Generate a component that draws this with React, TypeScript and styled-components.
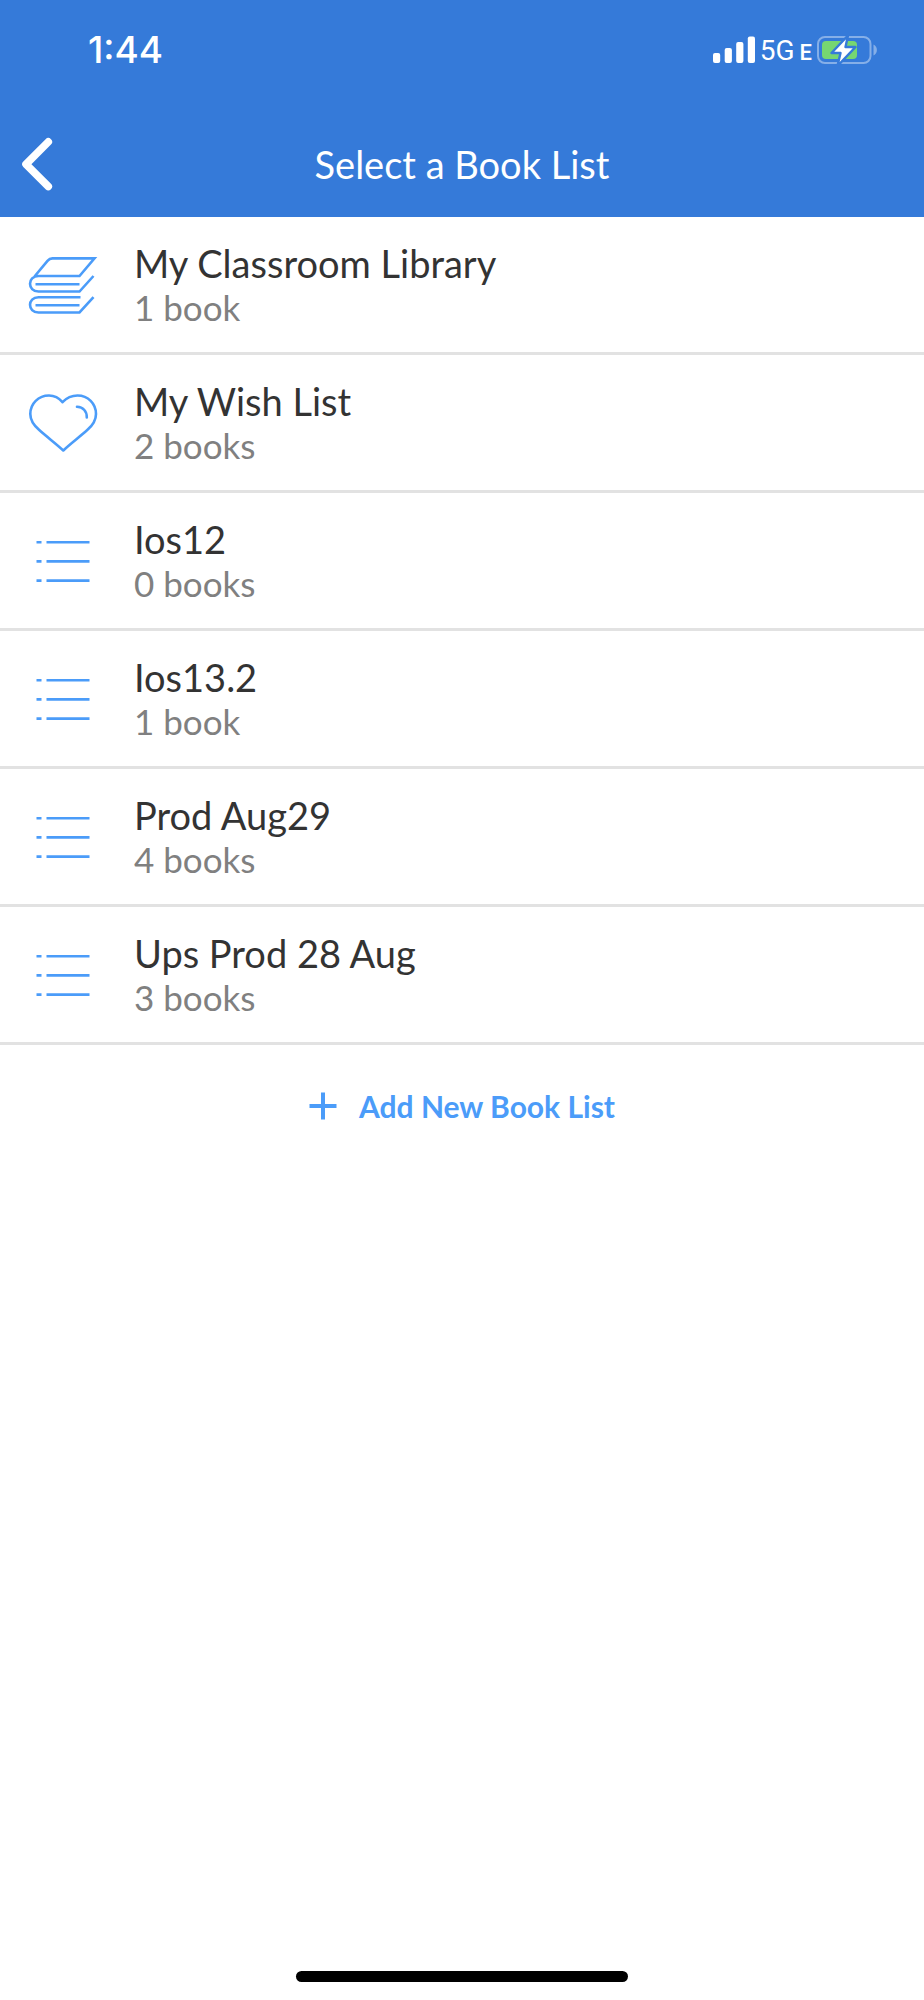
import React from "react";
import styled, { createGlobalStyle } from "styled-components";

const GlobalStyle = createGlobalStyle`
  *, *::before, *::after { box-sizing: border-box; }
  body { margin: 0; background: #fff; }
`;

const accent = "#4b9cf9";

const Screen = styled.div`
  display: flex;
  flex-direction: column;
  min-height: 100vh;
  background: #fff;
  color: #333;
  font-family: Lato, "Open Sans", sans-serif;
`;

const Header = styled.header`
  background: #357ad9;
  color: #fff;
`;

const StatusBar = styled.div`
  display: flex;
  align-items: center;
  justify-content: space-between;
  height: 100px;
  padding: 0 46px 0 88px;
`;

const Clock = styled.time`
  font-family: Inter, sans-serif;
  font-size: 37px;
  font-weight: 500;
  line-height: 44px;
`;

const Indicators = styled.div`
  display: flex;
  align-items: center;
  gap: 5px;
`;

const Network = styled.span`
  display: flex;
  align-items: baseline;
  gap: 5px;
  padding-top: 4px;
  font-family: Roboto, sans-serif;
  font-size: 28px;
  line-height: 28px;
`;

const NetworkSuffix = styled.span`
  font-size: 22px;
  font-weight: 500;
`;

const NavBar = styled.div`
  display: grid;
  grid-template-columns: 80px 1fr 80px;
  align-items: center;
  height: 117px;
  padding-top: 10px;
`;

const BackButton = styled.button`
  display: flex;
  align-items: center;
  height: 80px;
  padding: 0 0 0 20px;
  border: 0;
  background: none;
  color: inherit;
  cursor: pointer;
`;

const PageTitle = styled.h1`
  margin: 0;
  font-size: 38px;
  font-weight: 400;
  line-height: 44px;
  text-align: center;
`;

const List = styled.ul`
  margin: 0;
  padding: 0;
  list-style: none;
`;

const ListItem = styled.li`
  border-bottom: 3px solid #e2e2e2;
`;

const RowButton = styled.button`
  display: flex;
  align-items: center;
  width: 100%;
  height: 135px;
  padding: 0;
  border: 0;
  background: none;
  color: inherit;
  font: inherit;
  text-align: left;
  cursor: pointer;
`;

const IconSlot = styled.span`
  display: flex;
  justify-content: center;
  flex: none;
  width: 126px;
  margin-right: 8px;
`;

const RowText = styled.span`
  display: flex;
  flex-direction: column;
`;

const RowTitle = styled.span`
  font-size: 38px;
  line-height: 44px;
`;

const RowCount = styled.span`
  color: #808080;
  font-size: 35px;
  line-height: 44px;
`;

const AddButton = styled.button`
  display: flex;
  align-items: center;
  align-self: center;
  gap: 22px;
  height: 122px;
  padding: 0;
  border: 0;
  background: none;
  color: ${accent};
  font: inherit;
  font-size: 30px;
  font-weight: 700;
  line-height: 36px;
  cursor: pointer;
`;

const HomeIndicator = styled.div`
  align-self: center;
  width: 36%;
  height: 11px;
  margin: auto 0 18px;
  border-radius: 6px;
  background: #000;
`;

const SignalIcon = () => (
  <svg width="42" height="28" viewBox="0 0 42 28" fill="#fff" aria-hidden="true">
    <rect x="0" y="17" width="7.2" height="10" rx="2" />
    <rect x="11.7" y="12" width="7.2" height="15" rx="2" />
    <rect x="23.2" y="6" width="7.2" height="21" rx="2" />
    <rect x="34.8" y="0.5" width="7.2" height="26.5" rx="2" />
  </svg>
);

const BatteryIcon = () => (
  <svg width="61" height="30" viewBox="0 0 61 30" aria-hidden="true">
    <rect x="1" y="2" width="52.5" height="26" rx="7" fill="none" stroke="#fff" strokeOpacity="0.4" strokeWidth="2" />
    <path d="M56.5 9.500C61 11.500 61 18.500 56.500 20.500Z" fill="#fff" fillOpacity="0.4" />
    <rect x="5" y="6" width="35" height="18" rx="4" fill="#76d672" />
    <path
      d="M31 0.500L14.500 18H23.500L20.500 31L38.500 12H28.500Z"
      fill="#fff"
      stroke="#357ad9"
      strokeWidth="2.4"
      strokeLinejoin="round"
    />
  </svg>
);

const BackIcon = () => (
  <svg width="34" height="54" viewBox="0 0 34 54" fill="none" stroke="#fff" strokeWidth="7.6" strokeLinecap="round" strokeLinejoin="round" aria-hidden="true">
    <path d="M28.300 4.900L6 27.200L28.300 49.500" />
  </svg>
);

const BooksIcon = () => (
  <svg width="70" height="58" viewBox="0 0 70 58" fill="none" stroke={accent} strokeWidth="2.6" aria-hidden="true">
    <path d="M6.500 20.500L19.500 4.800Q21.500 2.400 24.500 2.400H66.500L51.500 20H10.500C-0.800 20-0.800 35.500 10.500 35.500H51.500L65.500 20" />
    <path d="M7.500 28.200H51.500" />
    <path d="M52.500 41.200H10.500C-0.800 41.200-0.800 56.500 10.500 56.500H51.500L65.500 41.200" />
    <path d="M7.500 49.200H51.500" />
  </svg>
);

const HeartIcon = () => (
  <svg width="70" height="58" viewBox="0 0 70 58" fill="none" stroke={accent} strokeWidth="2.6" strokeLinejoin="round" strokeLinecap="round" aria-hidden="true">
    <path d="M35.300 56.500C28 49.500 19.500 43.500 11 35.800C5.500 31 2.300 26 2.300 20C2.300 9.500 10.500 1.500 21 1.500C26.500 1.500 31 4 34.500 8.200C38.500 4 43.500 1.500 49.500 1.500C60 1.500 68 9.500 68 20C68 26 65 31 59.500 35.800C51 43.500 42.500 49.500 35.300 56.500Z" />
    <path d="M49 12.800C55 13.200 58.800 17 58.800 23.500" />
  </svg>
);

const LinesIcon = () => (
  <svg width="54" height="44" viewBox="0 0 54 44" fill="none" stroke={accent} strokeWidth="2.6" aria-hidden="true">
    <path d="M0.500 3.200H5.500M10.500 3.200H53.500M0.500 22.400H5.500M10.500 22.400H53.500M0.500 41.600H5.500M10.500 41.600H53.500" />
  </svg>
);

const PlusIcon = () => (
  <svg width="28" height="28" viewBox="0 0 28 28" fill="none" stroke={accent} strokeWidth="4" aria-hidden="true">
    <path d="M14 0.500V27.500M0.500 14H27.500" />
  </svg>
);

const icons = { books: BooksIcon, heart: HeartIcon, lines: LinesIcon };

interface BookList {
  name: string;
  count: number;
  icon: keyof typeof icons;
}

const bookLists: BookList[] = [
  { name: "My Classroom Library", count: 1, icon: "books" },
  { name: "My Wish List", count: 2, icon: "heart" },
  { name: "Ios12", count: 0, icon: "lines" },
  { name: "Ios13.2", count: 1, icon: "lines" },
  { name: "Prod Aug29", count: 4, icon: "lines" },
  { name: "Ups Prod 28 Aug", count: 3, icon: "lines" },
];

const BookListRow = ({ name, count, icon }: BookList) => {
  const Icon = icons[icon];
  return (
    <ListItem>
      <RowButton type="button">
        <IconSlot>
          <Icon />
        </IconSlot>
        <RowText>
          <RowTitle>{name}</RowTitle>
          <RowCount>{`${count} ${count === 1 ? "book" : "books"}`}</RowCount>
        </RowText>
      </RowButton>
    </ListItem>
  );
};

export default function App() {
  return (
    <Screen>
      <GlobalStyle />
      <Header>
        <StatusBar>
          <Clock>1:44</Clock>
          <Indicators>
            <SignalIcon />
            <Network>
              5G<NetworkSuffix>E</NetworkSuffix>
            </Network>
            <BatteryIcon />
          </Indicators>
        </StatusBar>
        <NavBar>
          <BackButton type="button" aria-label="Back">
            <BackIcon />
          </BackButton>
          <PageTitle>Select a Book List</PageTitle>
        </NavBar>
      </Header>
      <List>
        {bookLists.map((list) => (
          <BookListRow key={list.name} {...list} />
        ))}
      </List>
      <AddButton type="button">
        <PlusIcon />
        Add New Book List
      </AddButton>
      <HomeIndicator />
    </Screen>
  );
}
